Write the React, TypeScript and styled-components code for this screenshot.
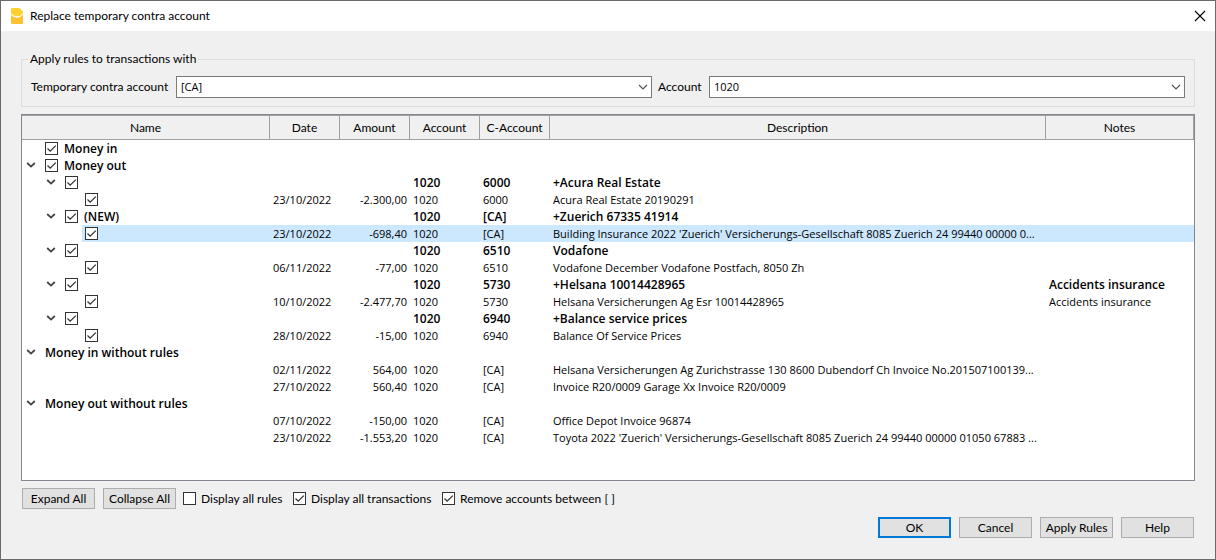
import React, { useState } from "react";
import styled, { createGlobalStyle, css } from "styled-components";

const dataFont = `"Open Sans", "Noto Sans", sans-serif`;

const GlobalStyle = createGlobalStyle`
  *, *::before, *::after { box-sizing: border-box; }
  body {
    margin: 0;
    background: #f0f0f0;
    color: #000;
    font-family: Lato, "Open Sans", sans-serif;
    font-size: 12px;
    line-height: 16px;
  }
  button, input, select { font: inherit; color: inherit; }
`;

const Dialog = styled.main`
  display: flex;
  flex-direction: column;
  min-height: 100vh;
  border: 1px solid #6a6a6c;
  background: #f0f0f0;
`;

const TitleBar = styled.header`
  display: flex;
  align-items: center;
  height: 30px;
  padding: 0 9px;
  background: #fff;
`;

const Title = styled.h1`
  flex: 1;
  margin: 0 0 0 6px;
  font-size: 12px;
  font-weight: 400;
`;

const CloseButton = styled.button`
  display: flex;
  padding: 0;
  border: 0;
  background: none;
`;

const Content = styled.div`
  display: flex;
  flex: 1;
  flex-direction: column;
  padding: 20px 20px 21px;
`;

const Filters = styled.fieldset`
  min-width: 0;
  margin: 0 0 7px;
  padding: 9px 9px 8px;
  border: 1px solid #dcdcdc;
`;

const Legend = styled.legend`
  margin-left: -3px;
  padding: 0 2px;
`;

const FilterGrid = styled.div`
  display: grid;
  grid-template-columns: 139px 1fr 45px 1fr;
  align-items: center;
  gap: 6px;
  white-space: nowrap;
`;

const ComboBox = styled.div`
  display: grid;
  align-items: center;
  > * { grid-area: 1 / 1; }
  > svg { justify-self: end; margin-right: 4px; pointer-events: none; }
`;

const Select = styled.select`
  width: 100%;
  height: 22px;
  padding: 0 4px;
  border: 1px solid #7a7a7a;
  border-radius: 0;
  background: #fff;
  font-family: ${dataFont};
  font-size: 11px;
  appearance: none;
`;

const TreeFrame = styled.div`
  flex: 1;
  border: 1px solid #828790;
  background: #fff;
`;

const Tree = styled.table`
  width: 100%;
  table-layout: fixed;
  border-collapse: separate;
  border-spacing: 0;
`;

const Column = styled.col<{ $width?: number }>`
  ${({ $width }) => $width && css`width: ${$width}px;`}
`;

const HeadCell = styled.th`
  height: 25px;
  padding: 0;
  border: solid #a0a0a0;
  border-width: 1px 1px 1px 0;
  background: #f0f0f0;
  font-weight: 400;
`;

const Cell = styled.td<{ $end?: boolean }>`
  height: 17px;
  padding: 0 3px;
  overflow: hidden;
  text-align: ${({ $end }) => ($end ? "right" : "left")};
  white-space: nowrap;
`;

const NameCell = styled(Cell)`
  padding: 0;
`;

const Row = styled.tr<{ $rule?: boolean; $selected?: boolean }>`
  font-family: ${dataFont};
  font-size: ${({ $rule }) => ($rule ? 12 : 11)}px;
  font-weight: ${({ $rule }) => ($rule ? 600 : 400)};
  ${({ $selected }) => $selected && css`
    ${Cell}:not(:first-child) { background: #cce8ff; }
    ${NameCell}:first-child { background: linear-gradient(#cce8ff, #cce8ff) 60px 0 no-repeat; }
  `}
`;

const Branch = styled.div<{ $level: number }>`
  display: flex;
  align-items: center;
  height: 17px;
  padding-left: ${({ $level }) => 3 + $level * 20}px;
`;

const Twisty = styled.button`
  display: flex;
  justify-content: center;
  width: 12px;
  margin-right: 8px;
  padding: 0;
  border: 0;
  background: none;
`;

const TwistySpace = styled.span`
  width: 20px;
`;

const Box = styled.span`
  display: grid;
  width: 13px;
  height: 13px;
  > * { grid-area: 1 / 1; }
  > svg { pointer-events: none; visibility: hidden; }
  > input:checked + svg { visibility: visible; }
`;

const BoxInput = styled.input`
  width: 13px;
  height: 13px;
  margin: 0;
  border: 1px solid #333;
  background: #fff;
  appearance: none;
`;

const BranchText = styled.span<{ $afterBox: boolean }>`
  margin-left: ${({ $afterBox }) => ($afterBox ? 6 : 0)}px;
`;

const Options = styled.div`
  display: flex;
  align-items: center;
  gap: 7px;
  margin: 7px 0 8px 1px;
`;

const ButtonGroup = styled.div`
  display: flex;
  gap: 8px;
`;

const Option = styled.label<{ $width: number }>`
  display: flex;
  align-items: center;
  gap: 5px;
  width: ${({ $width }) => $width}px;
  white-space: nowrap;
`;

const Actions = styled.footer`
  display: flex;
  justify-content: flex-end;
  gap: 8px;
  margin-right: 1px;
`;

const Button = styled.button<{ $primary?: boolean }>`
  width: 73px;
  height: 21px;
  padding: 0;
  border: ${({ $primary }) => ($primary ? "2px solid #0078d7" : "1px solid #adadad")};
  background: #e1e1e1;
  line-height: 16px;
  white-space: nowrap;
`;

const Logo = () => (
  <svg width="14" height="18" viewBox="0 0 14 18" aria-hidden="true">
    <path d="M1 2Q1 1 2 1H9.5L13 4.5V6.2Q10.500 9.300 7 9.300T1 6.400Z" fill="#ffd02e" />
    <path d="M1 7.800Q3.500 10.800 7 10.800T13 7.600V16Q13 17 12 17H2Q1 17 1 16Z" fill="#fdc231" />
  </svg>
);

const CloseIcon = () => (
  <svg width="12" height="12" viewBox="0 0 12 12" aria-hidden="true">
    <path d="M1 1L11 11M11 1L1 11" stroke="#000" strokeWidth="1.1" fill="none" />
  </svg>
);

const ComboArrow = () => (
  <svg width="10" height="6" viewBox="0 0 10 6" aria-hidden="true">
    <path d="M1 1L5 5L9 1" stroke="#555" strokeWidth="1.2" fill="none" />
  </svg>
);

const TreeArrow = () => (
  <svg width="10" height="7" viewBox="0 0 10 7" aria-hidden="true">
    <path d="M1.200 1L5 4.600L8.800 1" stroke="#444" strokeWidth="1.800" fill="none" />
  </svg>
);

type CheckProps = { checked?: boolean; label?: string; id?: string };

const Check = ({ checked = true, label, id }: CheckProps) => (
  <Box>
    <BoxInput type="checkbox" id={id} defaultChecked={checked} aria-label={label} />
    <svg width="13" height="13" viewBox="0 0 13 13" aria-hidden="true">
      <path d="M2.500 6.500L5.200 9.200L10.800 3.600" stroke="#333" strokeWidth="1.300" fill="none" />
    </svg>
  </Box>
);

type Entry = {
  level: number;
  open?: boolean;
  check?: boolean;
  rule?: boolean;
  selected?: boolean;
  name?: string;
  cells?: string[];
};

const group = (name: string, check: boolean, open = true): Entry => ({ level: 0, open, check, rule: true, name });
const rule = (cells: string[], name?: string): Entry => ({
  level: 1, open: true, check: true, rule: true, name, cells: ["", "", ...cells],
});
const match = (cells: string[], selected = false): Entry => ({ level: 2, check: true, selected, cells });
const loose = (cells: string[]): Entry => ({ level: 1, cells });

const entries: Entry[] = [
  group("Money in", true, false),
  group("Money out", true),
  rule(["1020", "6000", "+Acura Real Estate"]),
  match(["23/10/2022", "-2.300,00", "1020", "6000", "Acura Real Estate 20190291"]),
  rule(["1020", "[CA]", "+Zuerich 67335 41914"], "(NEW)"),
  match(["23/10/2022", "-698,40", "1020", "[CA]", "Building Insurance 2022 'Zuerich' Versicherungs-Gesellschaft 8085 Zuerich 24 99440 00000 0..."], true),
  rule(["1020", "6510", "Vodafone"]),
  match(["06/11/2022", "-77,00", "1020", "6510", "Vodafone December Vodafone Postfach, 8050 Zh"]),
  rule(["1020", "5730", "+Helsana 10014428965", "Accidents insurance"]),
  match(["10/10/2022", "-2.477,70", "1020", "5730", "Helsana Versicherungen Ag Esr 10014428965", "Accidents insurance"]),
  rule(["1020", "6940", "+Balance service prices"]),
  match(["28/10/2022", "-15,00", "1020", "6940", "Balance Of Service Prices"]),
  group("Money in without rules", false),
  loose(["02/11/2022", "564,00", "1020", "[CA]", "Helsana Versicherungen Ag Zurichstrasse 130 8600 Dubendorf Ch Invoice No.201507100139..."]),
  loose(["27/10/2022", "560,40", "1020", "[CA]", "Invoice R20/0009 Garage Xx Invoice R20/0009"]),
  group("Money out without rules", false),
  loose(["07/10/2022", "-150,00", "1020", "[CA]", "Office Depot Invoice 96874"]),
  loose(["23/10/2022", "-1.553,20", "1020", "[CA]", "Toyota 2022 'Zuerich' Versicherungs-Gesellschaft 8085 Zuerich 24 99440 00000 01050 67883 ..."]),
];

const headings = ["Name", "Date", "Amount", "Account", "C-Account", "Description", "Notes"];
const dataColumns = [0, 1, 2, 3, 4, 5];

const TreeRow = ({ entry }: { entry: Entry }) => {
  const cells = entry.cells ?? [];
  return (
    <Row $rule={entry.rule} $selected={entry.selected}>
      <NameCell>
        <Branch $level={entry.level}>
          {entry.open ? <Twisty type="button" aria-label="Collapse"><TreeArrow /></Twisty> : <TwistySpace />}
          {entry.check && <Check label={entry.name || cells[4] || "Rule"} />}
          {entry.name && <BranchText $afterBox={!!entry.check}>{entry.name}</BranchText>}
        </Branch>
      </NameCell>
      {dataColumns.map((i) => <Cell key={i} $end={i === 1}>{cells[i]}</Cell>)}
    </Row>
  );
};

export default function App() {
  const [contra, setContra] = useState("[CA]");
  const [account, setAccount] = useState("1020");
  return (
    <>
      <GlobalStyle />
      <Dialog>
        <TitleBar>
          <Logo />
          <Title>Replace temporary contra account</Title>
          <CloseButton type="button" aria-label="Close"><CloseIcon /></CloseButton>
        </TitleBar>
        <Content>
          <Filters>
            <Legend>Apply rules to transactions with</Legend>
            <FilterGrid>
              <label htmlFor="contra">Temporary contra account</label>
              <ComboBox>
                <Select id="contra" value={contra} onChange={(e) => setContra(e.target.value)}>
                  <option>[CA]</option>
                </Select>
                <ComboArrow />
              </ComboBox>
              <label htmlFor="account">Account</label>
              <ComboBox>
                <Select id="account" value={account} onChange={(e) => setAccount(e.target.value)}>
                  <option>1020</option>
                </Select>
                <ComboArrow />
              </ComboBox>
            </FilterGrid>
          </Filters>
          <TreeFrame>
            <Tree>
              <colgroup>
                <Column $width={248} />
                <Column $width={70} />
                <Column $width={70} />
                <Column $width={70} />
                <Column $width={70} />
                <Column />
                <Column $width={148} />
              </colgroup>
              <thead>
                <tr>{headings.map((h) => <HeadCell key={h} scope="col">{h}</HeadCell>)}</tr>
              </thead>
              <tbody>{entries.map((entry, i) => <TreeRow key={i} entry={entry} />)}</tbody>
            </Tree>
          </TreeFrame>
          <Options>
            <ButtonGroup>
              <Button type="button">Expand All</Button>
              <Button type="button">Collapse All</Button>
            </ButtonGroup>
            <Option $width={103} htmlFor="all-rules"><Check id="all-rules" checked={false} />Display all rules</Option>
            <Option $width={142} htmlFor="all-transactions"><Check id="all-transactions" />Display all transactions</Option>
            <Option $width={180} htmlFor="remove"><Check id="remove" />Remove accounts between [ ]</Option>
          </Options>
          <Actions>
            <Button type="submit" $primary>OK</Button>
            <Button type="button">Cancel</Button>
            <Button type="button">Apply Rules</Button>
            <Button type="button">Help</Button>
          </Actions>
        </Content>
      </Dialog>
    </>
  );
}
